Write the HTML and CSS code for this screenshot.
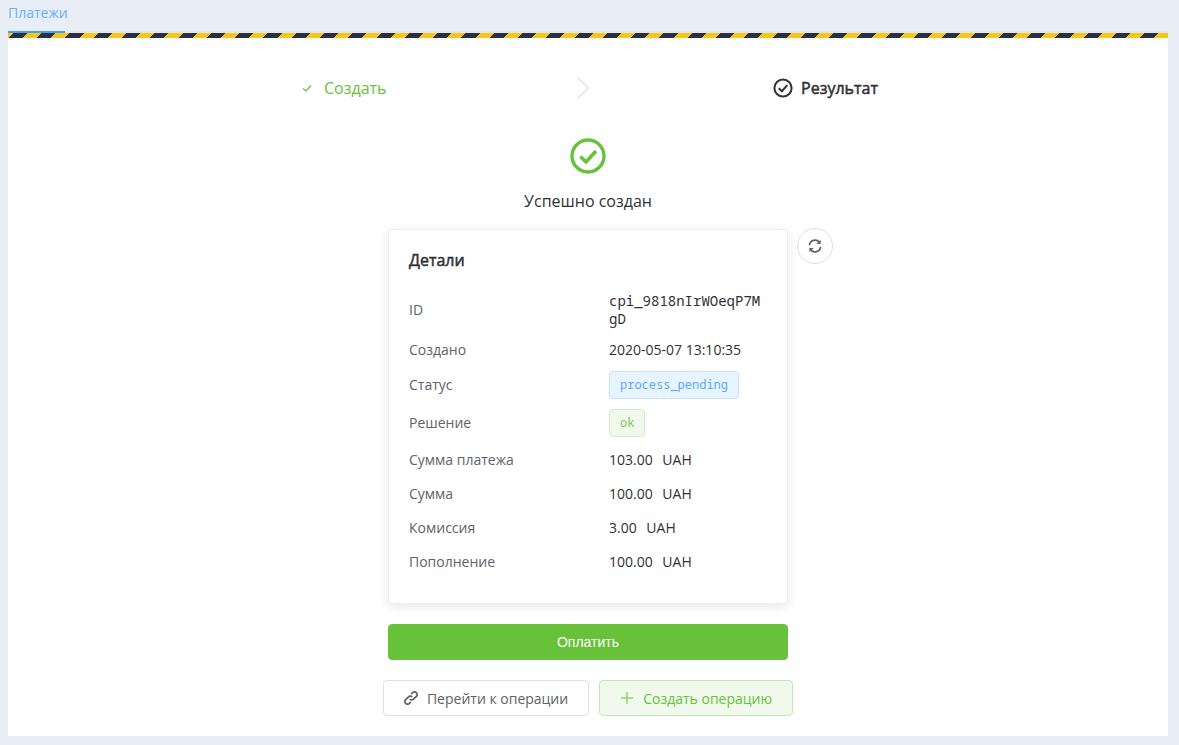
FILE: index.html
```html
<!DOCTYPE html>
<html lang="ru">
<head>
    <meta charset="UTF-8">
    <title>Платежи</title>
    <link rel="stylesheet" href="styles.css">
</head>
<body>
    <div class="tabs">
        <span class="tab">Платежи</span>
    </div>

    <div class="stripe"></div>

    <main class="panel">
        <div class="steps">
            <div class="step step-done">
                <svg class="step-check" viewBox="0 0 10 10"><path d="M1 5.5 L4 8 L9 2.5" fill="none" stroke="#67c23a" stroke-width="1.2"/></svg>
                <span>Создать</span>
            </div>
            <svg class="step-arrow" viewBox="0 0 12 22"><path d="M0.5 0.5 L11.5 11 L0.5 21.5" fill="none" stroke="#c8cad0" stroke-width="1"/></svg>
            <div class="step step-active">
                <svg class="step-result" viewBox="0 0 20 20"><circle cx="10" cy="10" r="8.6" fill="none" stroke="#303133" stroke-width="2"/><path d="M5.8 10.3 L8.9 13.2 L14.3 7.2" fill="none" stroke="#303133" stroke-width="2"/></svg>
                <span>Результат</span>
            </div>
        </div>

        <svg class="success-icon" viewBox="0 0 36 36"><circle cx="18" cy="18" r="16" fill="none" stroke="#67c23a" stroke-width="3.4"/><path d="M10.5 18.5 L16 24 L26 13" fill="none" stroke="#67c23a" stroke-width="3.6"/></svg>
        <div class="success-text">Успешно создан</div>

        <div class="card-wrap">
            <section class="card">
                <h2 class="card-title">Детали</h2>
                <div class="row">
                    <span class="label">ID</span>
                    <span class="value mono">cpi_9818nIrWOeqP7MgD</span>
                </div>
                <div class="row">
                    <span class="label">Создано</span>
                    <span class="value">2020-05-07 13:10:35</span>
                </div>
                <div class="row row-tag">
                    <span class="label">Статус</span>
                    <span class="value"><span class="tag tag-blue">process_pending</span></span>
                </div>
                <div class="row row-tag">
                    <span class="label">Решение</span>
                    <span class="value"><span class="tag tag-green">ok</span></span>
                </div>
                <div class="row">
                    <span class="label">Сумма платежа</span>
                    <span class="value">103.00 <span class="currency">UAH</span></span>
                </div>
                <div class="row">
                    <span class="label">Сумма</span>
                    <span class="value">100.00 <span class="currency">UAH</span></span>
                </div>
                <div class="row">
                    <span class="label">Комиссия</span>
                    <span class="value">3.00 <span class="currency">UAH</span></span>
                </div>
                <div class="row">
                    <span class="label">Пополнение</span>
                    <span class="value">100.00 <span class="currency">UAH</span></span>
                </div>
            </section>
            <button class="refresh">
                <svg viewBox="0 0 16 16"><path d="M1.6 7 A6.5 6.5 0 0 1 13 3.6 M14.4 9 A6.5 6.5 0 0 1 3 12.4" fill="none" stroke="#606266" stroke-width="1.9"/><path d="M14.4 0.8 V5.6 H9.6 Z M1.6 15.2 V10.4 H6.4 Z" fill="#606266"/></svg>
            </button>
        </div>

        <button class="btn-pay">Оплатить</button>

        <div class="actions">
            <button class="btn">
                <svg viewBox="1 1 12 12"><path d="M6 8 A2.2 2.2 0 0 0 9.2 8 L11.8 5.4 A2.3 2.3 0 0 0 8.6 2.2 L7.2 3.6 M8 6 A2.2 2.2 0 0 0 4.8 6 L2.2 8.6 A2.3 2.3 0 0 0 5.4 11.8 L6.8 10.4" fill="none" stroke="#606266" stroke-width="1.5"/></svg>
                Перейти к операции
            </button>
            <button class="btn btn-green">
                <svg viewBox="0 0 12 12"><path d="M6 0 V12 M0 6 H12" fill="none" stroke="#67c23a" stroke-width="1"/></svg>
                Создать операцию
            </button>
        </div>
    </main>
</body>
</html>
```

FILE: styles.css
```css
body {
    margin: 0;
    height: 745px;
    overflow: hidden;
    padding: 0 11px 9px 8px;
    box-sizing: border-box;
    display: flex;
    flex-direction: column;
    background-color: #e9edf5;
    font-family: "Open Sans", sans-serif;
    font-size: 14px;
    color: #303133;
}
.tabs {
    height: 33px;
    box-sizing: border-box;
    flex: none;
    border-bottom: 2px solid #e4e7ed;
}
.tab {
    display: block;
    width: 57px;
    height: 33px;
    box-sizing: border-box;
    line-height: 26px;
    white-space: nowrap;
    color: #66b1ff;
    border-bottom: 2px solid #409eff;
}
.stripe {
    height: 5px;
    flex: none;
    background: repeating-linear-gradient(-45deg, #f5c71e 0, #f5c71e 10px, #2b3040 10px, #2b3040 20px);
}
.panel {
    flex: 1;
    background-color: #fff;
    display: flex;
    flex-direction: column;
    align-items: center;
}
.steps {
    width: 576px;
    margin: 39px 0 0 4px;
    height: 22px;
    display: flex;
    align-items: center;
    font-size: 16px;
}
.step {
    display: flex;
    align-items: center;
}
.step-done {
    width: 275px;
    color: #67c23a;
}
.step-check {
    width: 10px;
    height: 10px;
    margin-right: 12px;
}
.step-arrow {
    width: 12px;
    height: 22px;
    flex: none;
}
.step-active {
    margin-left: auto;
    -webkit-text-stroke: 0.5px #303133;
}
.step-result {
    width: 20px;
    height: 20px;
    margin-right: 8px;
}
.success-icon {
    width: 36px;
    height: 36px;
    margin-top: 39px;
}
.success-text {
    margin-top: 16px;
    font-size: 16px;
    line-height: 22px;
}
.card-wrap {
    position: relative;
    margin-top: 17px;
}
.card {
    width: 400px;
    height: 375px;
    box-sizing: border-box;
    padding: 19px 20px 20px;
    background-color: #fff;
    border: 1px solid #ebeef5;
    border-radius: 4px;
    box-shadow: 0 2px 12px 0 rgba(0, 0, 0, 0.1);
}
.card-title {
    margin: 0 0 16px;
    font-size: 16px;
    line-height: 22px;
    font-weight: 400;
    -webkit-text-stroke: 0.5px #303133;
}
.row {
    display: flex;
    align-items: center;
    padding: 6px 0;
    line-height: 22px;
}
.row-tag {
    padding: 4px 0;
}
.row-tag + .row-tag {
    padding: 6px 0;
}
.label {
    width: 200px;
    flex: none;
    color: #606266;
}
.value {
    width: 158px;
    word-break: break-all;
}
.currency {
    margin-left: 6px;
}
.mono {
    font-family: "Noto Sans Mono", "DejaVu Sans Mono", monospace;
    line-height: 18px;
    margin: -1px 0;
}
.tag {
    display: inline-block;
    height: 28px;
    line-height: 26px;
    padding: 0 10px;
    box-sizing: border-box;
    border-radius: 4px;
    font-family: "Noto Sans Mono", "DejaVu Sans Mono", monospace;
    font-size: 12px;
    vertical-align: top;
}
.tag-blue {
    color: #5aa9ff;
    background-color: #e8f4ff;
    border: 1px solid #c6e2ff;
}
.tag-green {
    color: #7ac85a;
    background-color: #f0f9eb;
    border: 1px solid #d1edc4;
}
.refresh {
    position: absolute;
    left: 409px;
    top: -1px;
    width: 36px;
    height: 36px;
    padding: 0;
    display: flex;
    align-items: center;
    justify-content: center;
    background-color: #fff;
    border: 1px solid #dcdfe6;
    border-radius: 50%;
}
.refresh svg {
    width: 14px;
    height: 14px;
}
.btn-pay {
    width: 400px;
    height: 36px;
    margin-top: 20px;
    background-color: #67c23a;
    border: 1px solid #67c23a;
    border-radius: 4px;
    color: #fff;
    font-family: "Liberation Sans", Arial, sans-serif;
    font-size: 14px;
}
.actions {
    display: flex;
    gap: 10px;
    margin-top: 20px;
}
.btn {
    height: 36px;
    padding: 0 20px;
    display: flex;
    align-items: center;
    gap: 9px;
    background-color: #fff;
    border: 1px solid #dcdfe6;
    border-radius: 4px;
    color: #606266;
    font-family: "Open Sans", sans-serif;
    font-size: 14px;
}
.btn svg {
    width: 14px;
    height: 14px;
}
.btn-green {
    color: #67c23a;
    background-color: #f0f9eb;
    border-color: #c2e7b0;
}
.btn-green svg {
    width: 12px;
    height: 12px;
    margin: 0 1px 0 1px;
}
```
